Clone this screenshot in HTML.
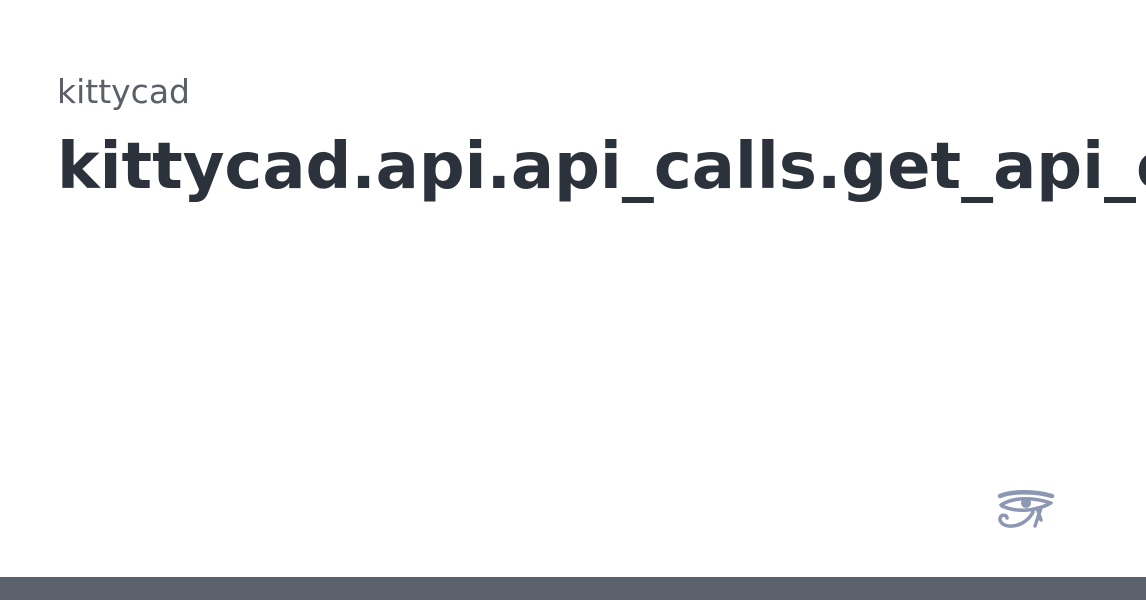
<!DOCTYPE html>
<html><head><meta charset="utf-8"><style>
html,body{margin:0;padding:0;width:1146px;height:600px;overflow:hidden;background:#fff;font-family:"DejaVu Sans","Liberation Sans",sans-serif;}
.sub{position:absolute;left:57px;top:72px;font-size:33px;color:#5b6068;line-height:40px;white-space:nowrap}
.title{position:absolute;left:57px;top:129px;font-size:64px;font-weight:bold;color:#2c323b;line-height:76px;white-space:nowrap}
.bar{position:absolute;left:0;top:577px;width:1146px;height:23px;background:#5b626d}
svg{position:absolute;left:997px;top:490px}
</style></head><body>
<div class="sub">kittycad</div>
<div class="title">kittycad.api.api_calls.get_api_call_for_user</div>
<svg width="58" height="42" viewBox="0 0 58 42">
<g fill="none" stroke="#8c97b4" stroke-linecap="round">
<path d="M3 6 C15 1 38 1 55 6" stroke-width="4.5"/>
<path d="M4 15 C16 7 36 7 54 13" stroke-width="3.5"/>
<path d="M5 16 C18 22 36 22 52 14" stroke-width="3.5"/>
<path d="M40 18 L44 30 M44 18 L38 36" stroke-width="3.5"/>
<path d="M36 22 C28 38 6 40 3 30 C2 24 10 24 10 28" stroke-width="3.5"/>
</g>
<circle cx="29" cy="13" r="5" fill="#8c97b4"/>
</svg>
<div class="bar"></div>
</body></html>
